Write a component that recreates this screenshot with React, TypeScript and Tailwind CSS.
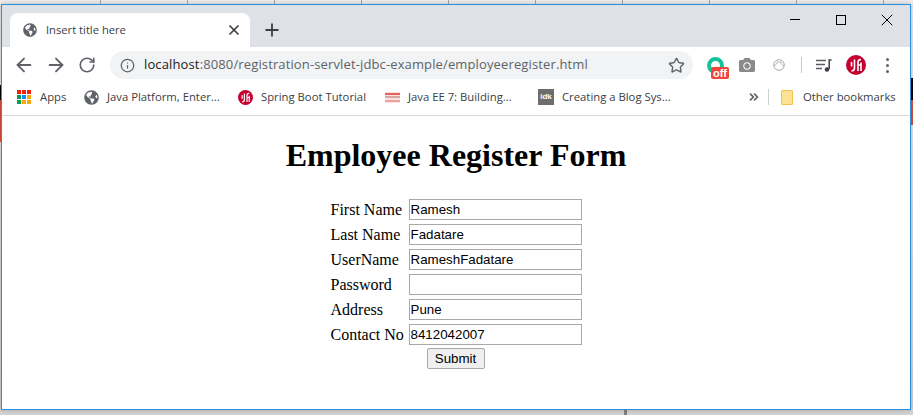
import { ArrowLeft, ArrowRight, ChevronsRight, Info, Plus, RotateCw, Star, X } from 'lucide-react';
import { FaCamera, FaGlobeAmericas } from 'react-icons/fa';

const uiFont = "font-['Open_Sans','Noto_Sans',sans-serif]";

const fields = [
  { label: 'First Name', value: 'Ramesh' },
  { label: 'Last Name', value: 'Fadatare' },
  { label: 'UserName', value: 'RameshFadatare' },
  { label: 'Password', value: '' },
  { label: 'Address', value: 'Pune' },
  { label: 'Contact No', value: '8412042007' },
];

const appColors = [
  'bg-[#f4210c]', 'bg-[#f4210c]', 'bg-[#f4210c]',
  'bg-[#0a9d58]', 'bg-[#0b8ff5]', 'bg-[#fba90a]',
  'bg-[#0a9d58]', 'bg-[#fba90a]', 'bg-[#fba90a]',
];

function JhLogo({ size }: { size: number }) {
  return (
    <svg width={size} height={size} viewBox="0 0 20 20" className="shrink-0">
      <circle cx="10" cy="10" r="10" fill="#c4012f" />
      <path
        d="M8.500 4.500v8.500c0 1.800-1 2.800-3 3M5.500 7v4.500M12 16V7c0-1.600 1-2.500 3-2.500M12 10h2.500M15 7.500V16"
        fill="none"
        stroke="#fff"
        strokeWidth="1.600"
      />
    </svg>
  );
}

function Bookmark({ icon, label, width }: { icon: React.ReactNode; label: string; width: string }) {
  return (
    <div className={`flex items-center ${width}`}>
      <div className="flex w-[23px] shrink-0 items-center">{icon}</div>
      <span className="whitespace-nowrap text-[11.3px] text-[#3c4043]">{label}</span>
    </div>
  );
}

function BrowserChrome() {
  return (
    <div className={uiFont}>
      {/* tab strip */}
      <div className="relative flex h-[42px] items-end bg-[#dee1e6] pl-[8px]">
        <div className="flex h-[34px] w-[240px] items-center rounded-t-[8px] bg-white pl-[13px] pr-[8px]">
          <FaGlobeAmericas className="h-[14px] w-[14px] text-[#5f6368]" />
          <span className="ml-[9px] flex-1 text-[11.2px] text-[#3c4043]">Insert title here</span>
          <X className="h-[16px] w-[16px] text-[#3c4043]" strokeWidth={2.6} />
        </div>
        <Plus className="mb-[7px] ml-[12px] h-[20px] w-[20px] text-[#3c4043]" strokeWidth={2.2} />
        <div className="absolute right-[0px] top-[0px] flex h-[29px] items-center">
          <div className="flex w-[46px] justify-center"><div className="h-[1px] w-[10px] bg-black" /></div>
          <div className="flex w-[46px] justify-center"><div className="h-[10px] w-[10px] border border-black" /></div>
          <div className="flex w-[46px] justify-center"><X className="h-[20px] w-[20px] text-black" strokeWidth={1.2} /></div>
        </div>
      </div>

      {/* toolbar */}
      <div className="flex h-[38px] items-center bg-white pb-[2px]">
        <div className="flex w-[108px] items-center pl-[11px]">
          <ArrowLeft className="h-[22px] w-[22px] text-[#5f6368]" strokeWidth={2} />
          <ArrowRight className="ml-[10px] h-[22px] w-[22px] text-[#5f6368]" strokeWidth={2} />
          <RotateCw className="ml-[11px] h-[18px] w-[18px] text-[#5f6368]" strokeWidth={2.2} />
        </div>
        <div className="flex h-[28px] w-[583px] items-center rounded-full bg-[#f1f3f4] pl-[10px] pr-[8px]">
          <Info className="h-[15px] w-[15px] text-[#5f6368]" strokeWidth={2} />
          <span className="ml-[9px] flex-1 text-[13px] tracking-[0.13px] text-[#5f6368]">
            <span className="text-[#202124]">localhost</span>:8080/registration-servlet-jdbc-example/employeeregister.html
          </span>
          <Star className="h-[17px] w-[17px] text-[#5f6368]" strokeWidth={2} />
        </div>
        <div className="flex flex-1 items-center pl-[12px]">
          <div className="relative h-[22px] w-[24px]">
            <div className="ml-[2px] mt-[3px] h-[17px] w-[17px] rounded-full border-[4px] border-[#15c39a]" />
            <span className="absolute bottom-[-3px] right-[0px] flex h-[12px] w-[18px] items-center justify-center rounded-[2px] bg-[#f0453a] font-['Liberation_Sans',sans-serif] text-[11px] font-bold leading-none text-white">off</span>
          </div>
          <FaCamera className="ml-[10px] h-[16px] w-[16px] text-[#8a8a8a]" />
          <svg width="12" height="12" viewBox="0 0 12 12" className="ml-[18px]">
            <circle cx="6" cy="6" r="5.300" fill="none" stroke="#a8a8a8" strokeWidth="1" />
            <path d="M1 6.500c2-.5 3-1.500 3-3.500M11 6.500c-2-.5-3-1.500-3-3.500M4 3h4" fill="none" stroke="#b4b4b4" strokeWidth="1" />
          </svg>
          <div className="ml-[16px] h-[16px] w-[1px] bg-[#c8cacd]" />
          <svg width="16" height="13" viewBox="0 0 16 13" className="ml-[14px]">
            <path d="M0 1.500h10M0 5.500h9M0 9.500h6" stroke="#5a5e62" strokeWidth="1.500" />
            <path d="M13.200 10V1h2.300" fill="none" stroke="#3c4043" strokeWidth="1.500" />
            <circle cx="11" cy="10.500" r="2.300" fill="#3c4043" />
          </svg>
          <div className="ml-[14px]"><JhLogo size={20} /></div>
          <div className="ml-[20px] flex flex-col gap-[3px]">
            <div className="h-[3px] w-[3px] rounded-full bg-[#5f6368]" />
            <div className="h-[3px] w-[3px] rounded-full bg-[#5f6368]" />
            <div className="h-[3px] w-[3px] rounded-full bg-[#5f6368]" />
          </div>
        </div>
      </div>

      {/* bookmarks bar */}
      <div className="flex h-[31px] items-center border-b border-[#d8d9da] bg-white pb-[6px] pl-[15px]">
        <Bookmark
          width="w-[67px]"
          label="Apps"
          icon={
            <div className="grid w-[14px] grid-cols-3 gap-[1px]">
              {appColors.map((color, i) => (
                <div key={i} className={`h-[4px] w-[4px] ${color}`} />
              ))}
            </div>
          }
        />
        <Bookmark
          width="w-[154px]"
          label="Java Platform, Enter..."
          icon={<FaGlobeAmericas className="h-[15px] w-[15px] text-[#5f6368]" />}
        />
        <Bookmark
          width="w-[147px]"
          label="Spring Boot Tutorial"
          icon={<JhLogo size={15} />}
        />
        <Bookmark
          width="w-[154px]"
          label="Java EE 7: Building..."
          icon={
            <div className="flex h-[11px] w-[15px] flex-col justify-between bg-[#fbe3e3] py-[1px]">
              <div className="h-[2px] bg-[#e8615f]" />
              <div className="h-[2px] bg-[#d9a5a5]" />
              <div className="h-[2px] bg-[#f2a0a0]" />
            </div>
          }
        />
        <Bookmark
          width="w-[208px]"
          label="Creating a Blog Sys..."
          icon={
            <div className="-ml-[1px] flex h-[16px] w-[16px] items-center justify-center bg-[#6d6d6d] font-['Liberation_Sans',sans-serif] text-[8px] font-bold text-white">
              idk
            </div>
          }
        />
        <ChevronsRight className="h-[14px] w-[14px] text-[#5f6368]" strokeWidth={3} />
        <div className="ml-[7px] h-[16px] w-[1px] bg-[#d0d1d3]" />
        <div className="ml-[12px] h-[15px] w-[12px] rounded-[1px] border border-[#f5c04f] bg-[#fde293]" />
        <span className="ml-[10px] whitespace-nowrap text-[11.3px] text-[#3c4043]">Other bookmarks</span>
      </div>
    </div>
  );
}

function RegisterForm() {
  return (
    <div className="flex flex-col items-center bg-white pt-[21px] font-['Liberation_Serif',serif] text-black">
      <h1 className="text-[32px] font-bold leading-[37px]">Employee Register Form</h1>
      <form className="ml-[1px] mt-[25px] flex flex-col pb-[38px]">
        <div className="grid w-[252px] grid-cols-[78px_173px] gap-y-[4px] text-[16px]">
          {fields.map((field) => (
            <div key={field.label} className="contents">
              <label className="leading-[21px]">{field.label}</label>
              <input
                readOnly
                value={field.value}
                className="h-[21px] w-[173px] border border-[#a9a9a9] px-[1px] font-['Liberation_Sans',sans-serif] text-[13.33px] text-black outline-none"
              />
            </div>
          ))}
        </div>
        <button
          type="button"
          className="ml-[96px] mt-[3px] h-[21px] w-[58px] rounded-[2px] border border-[#a9a9a9] bg-[#efefef] font-['Liberation_Sans',sans-serif] text-[13.33px] leading-none text-black"
        >
          Submit
        </button>
      </form>
    </div>
  );
}

export default function App() {
  return (
    <div className="relative h-[415px] w-[913px] overflow-hidden bg-gradient-to-b from-[#eeeeee] to-[#d4d4d4] pl-[1px] pt-[4px]">
      {/* desktop peeking out behind the window */}
      <div className="absolute left-[0px] top-[0px] flex h-[4px] pl-[14px]">
        {[0, 1, 2, 3, 4, 5, 6, 7, 8, 9].map((i) => (
          <div key={i} className="h-[4px] w-[87px] border-r border-[#a8a8a8]" />
        ))}
      </div>
      <div className="absolute left-[0px] top-[85px] h-[15px] w-[1px] bg-black" />
      <div className="absolute left-[0px] top-[100px] h-[42px] w-[1px] bg-[#e0503a]" />
      <div className="absolute right-[0px] top-[78px] h-[22px] w-[2px] bg-black" />
      <div className="absolute right-[0px] top-[100px] h-[25px] w-[2px] bg-[#e0503a]" />
      <div className="absolute bottom-[0px] left-[624px] h-[5px] w-[3px] bg-[#808080]" />
      <div className="relative z-10 h-[406px] w-[910px] border border-[#2b8fdf] bg-white shadow-[0_0_5px_rgba(0,0,0,0.25)]">
        <BrowserChrome />
        <RegisterForm />
      </div>
    </div>
  );
}
